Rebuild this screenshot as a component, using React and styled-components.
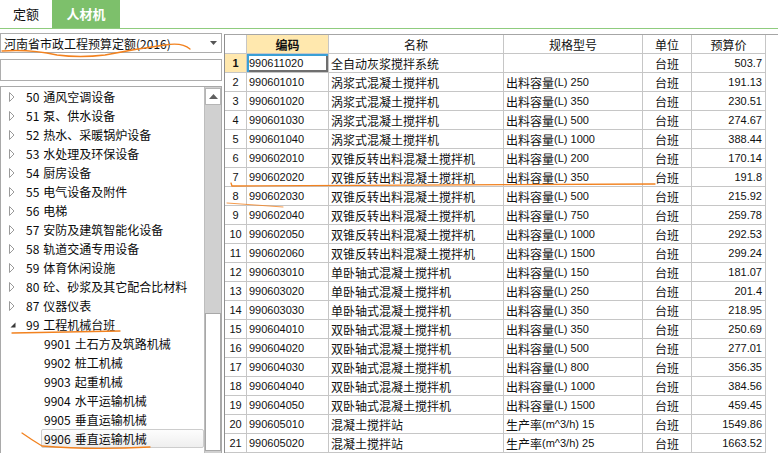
import React from 'react';
import styled, { createGlobalStyle } from 'styled-components';

const Global = createGlobalStyle`
  html, body { margin: 0; padding: 0; background: #fff; }
  body { font-family: "Noto Sans CJK SC", "Liberation Sans", sans-serif; }
  * { box-sizing: border-box; }
`;

const Root = styled.div`
  position: relative;
  width: 778px;
  height: 453px;
  overflow: hidden;
  background: #fff;
  display: flex;
  flex-direction: column;
`;

const TabBar = styled.div`
  height: 29px;
  display: flex;
  border-bottom: 1px solid #8fcc7e;
  background: #fff;
`;

const Tab = styled.div`
  width: ${p => (p.$active ? '68px' : '52px')};
  display: flex;
  align-items: center;
  justify-content: center;
  font-size: 13px;
  font-weight: ${p => (p.$active ? 700 : 400)};
  color: ${p => (p.$active ? '#fff' : '#111')};
  background: ${p => (p.$active ? '#7dc06b' : '#fff')};
  padding-bottom: 1px;
`;

const Body = styled.div`
  flex: 1;
  display: flex;
  padding-top: 4px;
  min-height: 0;
`;

const LeftPanel = styled.div`
  width: 222px;
  display: flex;
  flex-direction: column;
`;

const Combo = styled.div`
  height: 20px;
  border: 1px solid #adadad;
  display: flex;
  align-items: center;
  justify-content: space-between;
  padding: 0 4px 0 3px;
  font-size: 12px;
  color: #111;
  background: #fff;
`;

const Search = styled.div`
  height: 22px;
  margin-top: 6px;
  border: 1px solid #adadad;
  background: #fff;
`;

const Tree = styled.div`
  flex: 1;
  margin-top: 5px;
  border: 1px solid #a9a9a9;
  border-bottom: none;
  display: flex;
  min-height: 0;
`;

const TreeList = styled.div`
  flex: 1;
  display: flex;
  flex-direction: column;
`;

const TreeRow = styled.div`
  height: 19px;
  display: flex;
  align-items: center;
  font-size: 12px;
  color: #0a0a0a;
  padding-left: ${p => (p.$level === 2 ? '40px' : '8px')};
`;

const Arrow = styled.span`
  width: 14px;
  height: 19px;
  display: flex;
  align-items: center;
`;

const Label = styled.span`
  display: flex;
  gap: 4px;
  white-space: nowrap;
  line-height: 17px;
  padding: 0 2px;
  border: 1px solid ${p => (p.$selected ? '#cdcdcd' : 'transparent')};
  border-radius: 2px;
  background: ${p => (p.$selected ? 'linear-gradient(#fdfdfd, #efefef)' : 'transparent')};
  width: ${p => (p.$selected ? '163px' : 'auto')};
`;

const ScrollBar = styled.div`
  width: 17px;
  border-left: 1px solid #bdbdbd;
  background: #d0d0d0;
  display: flex;
  flex-direction: column;
  padding-top: 1px;
`;

const ScrollBtn = styled.div`
  height: 17px;
  background: #fff;
  border: 1px solid #b5b5b5;
  display: flex;
  align-items: center;
  justify-content: center;
`;

const ScrollThumb = styled.div`
  margin-top: ${p => p.$offset}px;
  flex: 1;
  background: #fff;
  border: 1px solid #a8a8a8;
  margin-bottom: 2px;
`;

const Splitter = styled.div`
  width: 2px;
`;

const GridWrap = styled.div`
  flex: 1;
  margin-top: 1px;
  border-top: 1px solid #a6a6a6;
  border-left: 1px solid #8e8e8e;
  display: flex;
  flex-direction: column;
  background: #fff;
`;

const GridRow = styled.div`
  display: flex;
  height: 19px;
  flex-shrink: 0;
`;

const Cell = styled.div`
  width: ${p => p.$w}px;
  flex-shrink: 0;
  border-right: 1px solid #c6c6c6;
  border-bottom: 1px solid #c6c6c6;
  display: flex;
  align-items: center;
  justify-content: ${p => (p.$align === 'right' ? 'flex-end' : p.$align === 'center' ? 'center' : 'flex-start')};
  padding: ${p => (p.$align === 'right' ? '0 3px 0 0' : p.$align === 'center' ? '0' : '0 0 0 2px')};
  font-family: ${p => (p.$num ? '"Liberation Sans", sans-serif' : '"Noto Sans CJK SC", "Liberation Sans", sans-serif')};
  font-size: ${p => (p.$num ? '11px' : '12px')};
  font-weight: ${p => (p.$bold ? 700 : 400)};
  color: #111;
  white-space: nowrap;
  overflow: hidden;
  background: ${p => (p.$hl ? '#ffe8ae' : '#fff')};
  box-shadow: ${p => (p.$focus ? 'inset 2px 2px 0 #3aa0d6, inset -2px -2px 0 #6f6f6f' : 'none')};
`;

const Num = styled.span`
  font-family: "Liberation Sans", sans-serif;
  font-size: 11px;
  white-space: pre;
`;

const Overlay = styled.svg`
  position: absolute;
  left: 0;
  top: 0;
  pointer-events: none;
`;

const COLS = [22, 82, 175, 139, 49, 74];

const treeItems = [
  { n: '50', t: '通风空调设备' },
  { n: '51', t: '泵、供水设备' },
  { n: '52', t: '热水、采暖锅炉设备' },
  { n: '53', t: '水处理及环保设备' },
  { n: '54', t: '厨房设备' },
  { n: '55', t: '电气设备及附件' },
  { n: '56', t: '电梯' },
  { n: '57', t: '安防及建筑智能化设备' },
  { n: '58', t: '轨道交通专用设备' },
  { n: '59', t: '体育休闲设施' },
  { n: '80', t: '砼、砂浆及其它配合比材料' },
  { n: '87', t: '仪器仪表' },
  { n: '99', t: '工程机械台班', open: true },
  { n: '9901', t: '土石方及筑路机械', l: 2 },
  { n: '9902', t: '桩工机械', l: 2 },
  { n: '9903', t: '起重机械', l: 2 },
  { n: '9904', t: '水平运输机械', l: 2 },
  { n: '9905', t: '垂直运输机械', l: 2 },
  { n: '9906', t: '垂直运输机械', l: 2, sel: true },
];

const M1 = '涡浆式混凝土搅拌机';
const M2 = '双锥反转出料混凝土搅拌机';
const M3 = '单卧轴式混凝土搅拌机';
const M4 = '双卧轴式混凝土搅拌机';
const C = '出料容量';
const P = '生产率';

const data = [
  ['990611020', '全自动灰浆搅拌系统', null, '503.7'],
  ['990601010', M1, [C, '(L) 250'], '191.13'],
  ['990601020', M1, [C, '(L) 350'], '230.51'],
  ['990601030', M1, [C, '(L) 500'], '274.67'],
  ['990601040', M1, [C, '(L) 1000'], '388.44'],
  ['990602010', M2, [C, '(L) 200'], '170.14'],
  ['990602020', M2, [C, '(L) 350'], '191.8'],
  ['990602030', M2, [C, '(L) 500'], '215.92'],
  ['990602040', M2, [C, '(L) 750'], '259.78'],
  ['990602050', M2, [C, '(L) 1000'], '292.53'],
  ['990602060', M2, [C, '(L) 1500'], '299.24'],
  ['990603010', M3, [C, '(L) 150'], '181.07'],
  ['990603020', M3, [C, '(L) 250'], '201.4'],
  ['990603030', M3, [C, '(L) 350'], '218.95'],
  ['990604010', M4, [C, '(L) 350'], '250.69'],
  ['990604020', M4, [C, '(L) 500'], '277.01'],
  ['990604030', M4, [C, '(L) 800'], '356.35'],
  ['990604040', M4, [C, '(L) 1000'], '384.56'],
  ['990604050', M4, [C, '(L) 1500'], '459.45'],
  ['990605010', '混凝土搅拌站', [P, '(m^3/h) 15'], '1549.86'],
  ['990605020', '混凝土搅拌站', [P, '(m^3/h) 25'], '1663.52'],
];

function TreeArrow({ open }) {
  if (open) {
    return (
      <svg width="6" height="6" viewBox="0 0 6 6" style={{ marginLeft: 1 }}>
        <polygon points="5.5,0.5 5.5,5.5 0.5,5.5" fill="#3a3a3a" />
      </svg>
    );
  }
  return (
    <svg width="6" height="10" viewBox="0 0 6 10">
      <polygon points="0.5,0.5 5,5 0.5,9.5" fill="#fff" stroke="#9a9a9a" strokeWidth="1" />
    </svg>
  );
}

export default function App() {
  return (
    <Root>
      <Global />
      <TabBar>
        <Tab>定额</Tab>
        <Tab $active>人材机</Tab>
      </TabBar>
      <Body>
        <LeftPanel>
          <Combo>
            <span>河南省市政工程预算定额(2016)</span>
            <svg width="7" height="4" viewBox="0 0 7 4">
              <polygon points="0,0 7,0 3.5,4" fill="#555" />
            </svg>
          </Combo>
          <Search />
          <Tree>
            <TreeList>
              {treeItems.map((it, i) => (
                <TreeRow key={i} $level={it.l || 1}>
                  {(it.l || 1) === 1 && (
                    <Arrow>
                      <TreeArrow open={it.open} />
                    </Arrow>
                  )}
                  <Label $selected={it.sel}>
                    <span>{it.n}</span>
                    <span>{it.t}</span>
                  </Label>
                </TreeRow>
              ))}
            </TreeList>
            <ScrollBar>
              <ScrollBtn>
                <svg width="9" height="5" viewBox="0 0 9 5">
                  <polygon points="0,5 9,5 4.5,0" fill="#606060" />
                </svg>
              </ScrollBtn>
              <ScrollThumb $offset={208} />
            </ScrollBar>
          </Tree>
        </LeftPanel>
        <Splitter />
        <GridWrap>
          <GridRow>
            <Cell $w={COLS[0]} />
            <Cell $w={COLS[1]} $align="center" $hl $bold>编码</Cell>
            <Cell $w={COLS[2]} $align="center">名称</Cell>
            <Cell $w={COLS[3]} $align="center">规格型号</Cell>
            <Cell $w={COLS[4]} $align="center">单位</Cell>
            <Cell $w={COLS[5]} $align="center">预算价</Cell>
          </GridRow>
          {data.map((r, i) => (
            <GridRow key={i}>
              <Cell $w={COLS[0]} $align="center" $num $hl={i === 0} $bold={i === 0}>{i + 1}</Cell>
              <Cell $w={COLS[1]} $num $focus={i === 0}>{r[0]}</Cell>
              <Cell $w={COLS[2]}>{r[1]}</Cell>
              <Cell $w={COLS[3]}>
                {r[2] && (
                  <>
                    {r[2][0]}
                    <Num>{r[2][1]}</Num>
                  </>
                )}
              </Cell>
              <Cell $w={COLS[4]} $align="center">台班</Cell>
              <Cell $w={COLS[5]} $align="right" $num>{r[3]}</Cell>
            </GridRow>
          ))}
        </GridWrap>
      </Body>
      <Overlay width="778" height="453" viewBox="0 0 778 453">
        <g fill="none" stroke="#f2821f" strokeWidth="1.3" strokeLinecap="round">
          <path d="M2 51 Q 30 49 57 55 Q 80 58 105 55 Q 135 49 165 45 Q 182 42 190 49" />
          <path d="M12 333 L 120 331" />
          <path d="M22 433 Q 32 440 42 446 Q 90 450 150 447" />
          <path d="M231 183 L 232 186 Q 420 185 655 184" />
          <path d="M227 203 Q 255 205 283 207" strokeWidth="0.8" />
        </g>
      </Overlay>
    </Root>
  );
}
